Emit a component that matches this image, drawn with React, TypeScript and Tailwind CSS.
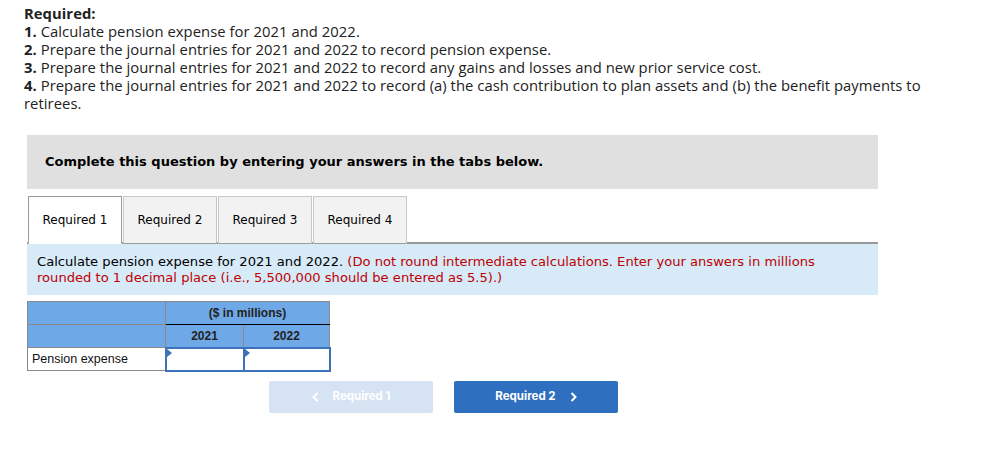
import React from 'react'

const TABS = ['Required 1', 'Required 2', 'Required 3', 'Required 4']

const AnswerCell = () => (
  <td className="relative h-[23px] border-2 border-[#3b72b9] bg-white p-0">
    <span className="absolute left-0 top-0 h-0 w-0 border-b-[4px] border-l-[5px] border-t-[4px] border-b-transparent border-l-[#3b72b9] border-t-transparent" />
  </td>
)

const App: React.FC = () => {
  // ? Render(s)
  return (
    <div className="min-h-[467px] w-[999px] bg-white text-[#222]">
      {/* requirements list */}
      <div className="px-6 pt-[4px] font-['Open_Sans',sans-serif] text-[14.8px] leading-[18px] tracking-[0.05px]">
        <p className="font-bold">Required:</p>
        <p>
          <b>1.</b> Calculate pension expense for 2021 and 2022.
        </p>
        <p>
          <b>2.</b> Prepare the journal entries for 2021 and 2022 to record pension expense.
        </p>
        <p>
          <b>3.</b> Prepare the journal entries for 2021 and 2022 to record any gains and losses and new prior service cost.
        </p>
        <p className="w-[915px]">
          <b>4.</b> Prepare the journal entries for 2021 and 2022 to record (a) the cash contribution to plan assets and (b) the benefit payments to retirees.
        </p>
      </div>

      <div className="ml-[27px] mt-[23px] w-[851px] font-['DejaVu_Sans',Verdana,sans-serif]">
        {/* instructions */}
        <div className="flex h-[54px] items-center bg-[#e0e0e0] pl-[18px] text-[13px] font-bold text-black">
          Complete this question by entering your answers in the tabs below.
        </div>

        {/* tabs */}
        <div className="mt-[7px] flex items-end border-b-2 border-[#9a9a9a] pl-px">
          {TABS.map((tab, i) => (
            <div
              key={tab}
              className={`-mb-[2px] mr-px flex h-[48px] w-[94px] items-center justify-center border text-[12px] text-black ${
                i === 0 ? 'border-[#9a9a9a] border-b-white bg-white' : 'border-[#c8c8c8] border-b-[#9a9a9a] bg-[#f2f2f2]'
              }`}
            >
              {tab}
            </div>
          ))}
        </div>

        {/* info */}
        <div className="h-[51px] bg-[#d6eaf8] px-[10px] pt-[10px] text-[13.1px] leading-[16px] text-black">
          Calculate pension expense for 2021 and 2022.{' '}
          <span className="text-[#c00000]">
            (Do not round intermediate calculations. Enter your answers in millions rounded to 1 decimal place (i.e.,
            5,500,000 should be entered as 5.5).)
          </span>
        </div>

        {/* answer table */}
        <table className="mt-[6px] border-collapse font-['Liberation_Sans',Arial,sans-serif] text-[12px]">
          <tbody>
            <tr className="h-[23px] bg-[#6fa8e6]">
              <td className="w-[138px] border border-[#8a8a8a]" />
              <td colSpan={2} className="border border-[#8a8a8a] border-b-black text-center font-bold text-[#222]">
                ($ in millions)
              </td>
            </tr>
            <tr className="h-[23px] bg-[#6fa8e6]">
              <td className="border border-[#8a8a8a]" />
              <td className="w-[78px] border border-[#8a8a8a] text-center font-bold text-[#222]">2021</td>
              <td className="w-[86px] border border-[#8a8a8a] text-center font-bold text-[#222]">2022</td>
            </tr>
            <tr className="h-[23px]">
              <td className="border border-[#8a8a8a] pl-[4px] text-[12.5px] text-[#111]">Pension expense</td>
              <AnswerCell />
              <AnswerCell />
            </tr>
          </tbody>
        </table>

        {/* navigation */}
        <div className="ml-[242px] mt-[9px] flex gap-[21px] font-['Inter',sans-serif] text-[11.5px] font-bold text-white">
          <button className="flex h-[32px] w-[164px] items-center justify-center gap-[14px] rounded-[2px] bg-[#d6e3f3]">
            <svg width="7" height="10" viewBox="0 0 7 10" fill="none" stroke="white" strokeWidth="2">
              <path d="M5.5 1 1.5 5l4 4" />
            </svg>
            Required 1
          </button>
          <button className="flex h-[32px] w-[164px] items-center justify-center gap-[14px] rounded-[2px] bg-[#2f6fbf]">
            Required 2
            <svg width="7" height="10" viewBox="0 0 7 10" fill="none" stroke="white" strokeWidth="2">
              <path d="M1.5 1l4 4-4 4" />
            </svg>
          </button>
        </div>
      </div>
    </div>
  )
}

export default App
